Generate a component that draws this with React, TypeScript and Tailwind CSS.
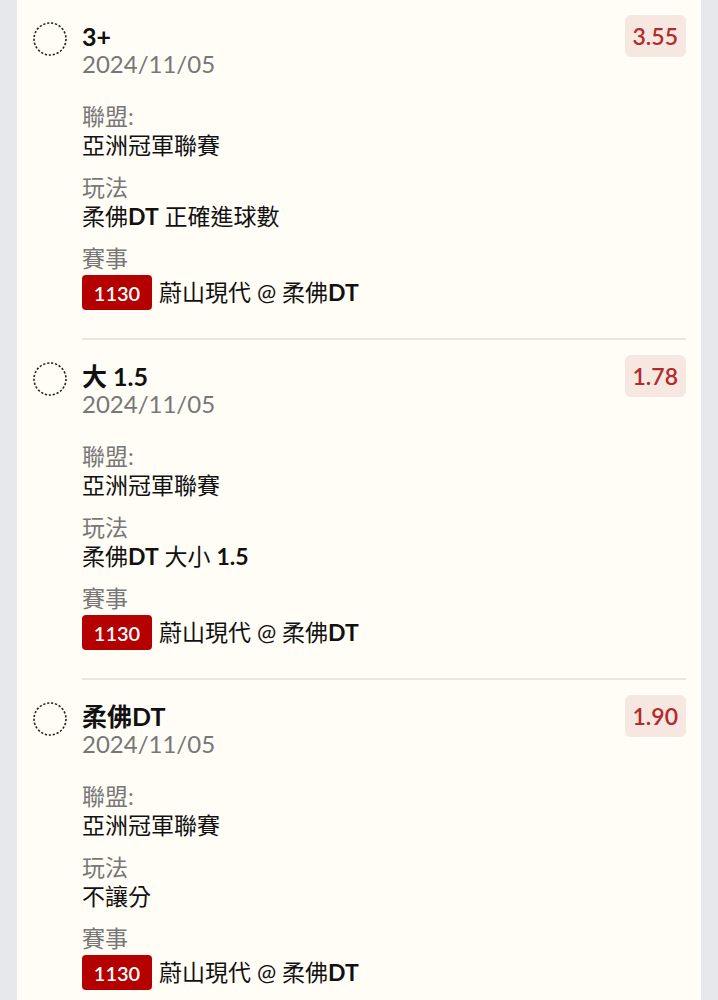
const FONT = { fontFamily: 'Lato, "Noto Sans CJK TC", sans-serif' };

type Bet = {
  pick: string;
  date: string;
  league: string;
  market: string;
  code: string;
  match: string;
  odds: string;
};

const BETS: Bet[] = [
  { pick: "3+", date: "2024/11/05", league: "亞洲冠軍聯賽", market: "柔佛DT 正確進球數", code: "1130", match: "蔚山現代 @ 柔佛DT", odds: "3.55" },
  { pick: "大 1.5", date: "2024/11/05", league: "亞洲冠軍聯賽", market: "柔佛DT 大小 1.5", code: "1130", match: "蔚山現代 @ 柔佛DT", odds: "1.78" },
  { pick: "柔佛DT", date: "2024/11/05", league: "亞洲冠軍聯賽", market: "不讓分", code: "1130", match: "蔚山現代 @ 柔佛DT", odds: "1.90" },
];

// latin runs in bold the way the source app renders them
function Mixed({ text }: { text: string }) {
  const parts = text.split(/([A-Za-z0-9.]+)/);
  return (
    <>
      {parts.map((p, i) =>
        /^[A-Za-z0-9.]+$/.test(p) ? (
          <span key={i} className="font-bold">{p}</span>
        ) : (
          <span key={i}>{p}</span>
        ),
      )}
    </>
  );
}

function DottedRadio() {
  return (
    <svg width="34" height="34" viewBox="0 0 34 34" className="block">
      <circle cx="17" cy="17" r="16" fill="none" stroke="#222" strokeWidth="1.6" strokeDasharray="2.2 1.8" />
    </svg>
  );
}

function BetRow({ bet }: { bet: Bet }) {
  return (
    <div className="flex">
      <div className="w-[34px] shrink-0 pt-[22px] mr-[15px]">
        <DottedRadio />
      </div>
      <div className="flex-1 border-b-2 border-[#e8e7e1] pt-[22px] pb-[28px]">
        <div className="flex items-start justify-between">
          <div>
            <div className="text-[25px] font-bold leading-[28px] text-[#111]">{bet.pick}</div>
            <div className="text-[24px] leading-[28px] text-[#777]">{bet.date}</div>
          </div>
          <div className="mt-[-7px] rounded-md bg-[#f7e7e1] px-[8px] py-[6px] text-[23px] font-semibold leading-[30px] text-[#b32a2a]">
            {bet.odds}
          </div>
        </div>
        <div className="mt-[24px] text-[23px] leading-[29px] text-[#777]">聯盟:</div>
        <div className="text-[23px] leading-[29px] text-[#111]">{bet.league}</div>
        <div className="mt-[13px] text-[23px] leading-[29px] text-[#777]">玩法</div>
        <div className="text-[23px] leading-[29px] text-[#111]">
          <Mixed text={bet.market} />
        </div>
        <div className="mt-[13px] text-[23px] leading-[29px] text-[#777]">賽事</div>
        <div className="mt-[2px] flex items-center gap-[7px]">
          <span className="flex h-[35px] w-[70px] items-center justify-center rounded-[4px] bg-[#b50000] text-[20px] font-semibold text-white">
            {bet.code}
          </span>
          <span className="text-[23px] leading-[29px] text-[#111]">
            <Mixed text={bet.match} />
          </span>
        </div>
      </div>
    </div>
  );
}

export default function App() {
  return (
    <div className="min-h-[1000px] bg-[#e6e7ea] px-[17px]" style={FONT}>
      <div className="min-h-[1000px] bg-[#fffdf5] pl-[16px] pr-[15px]">
        {BETS.map((bet, i) => (
          <BetRow key={i} bet={bet} />
        ))}
      </div>
    </div>
  );
}
